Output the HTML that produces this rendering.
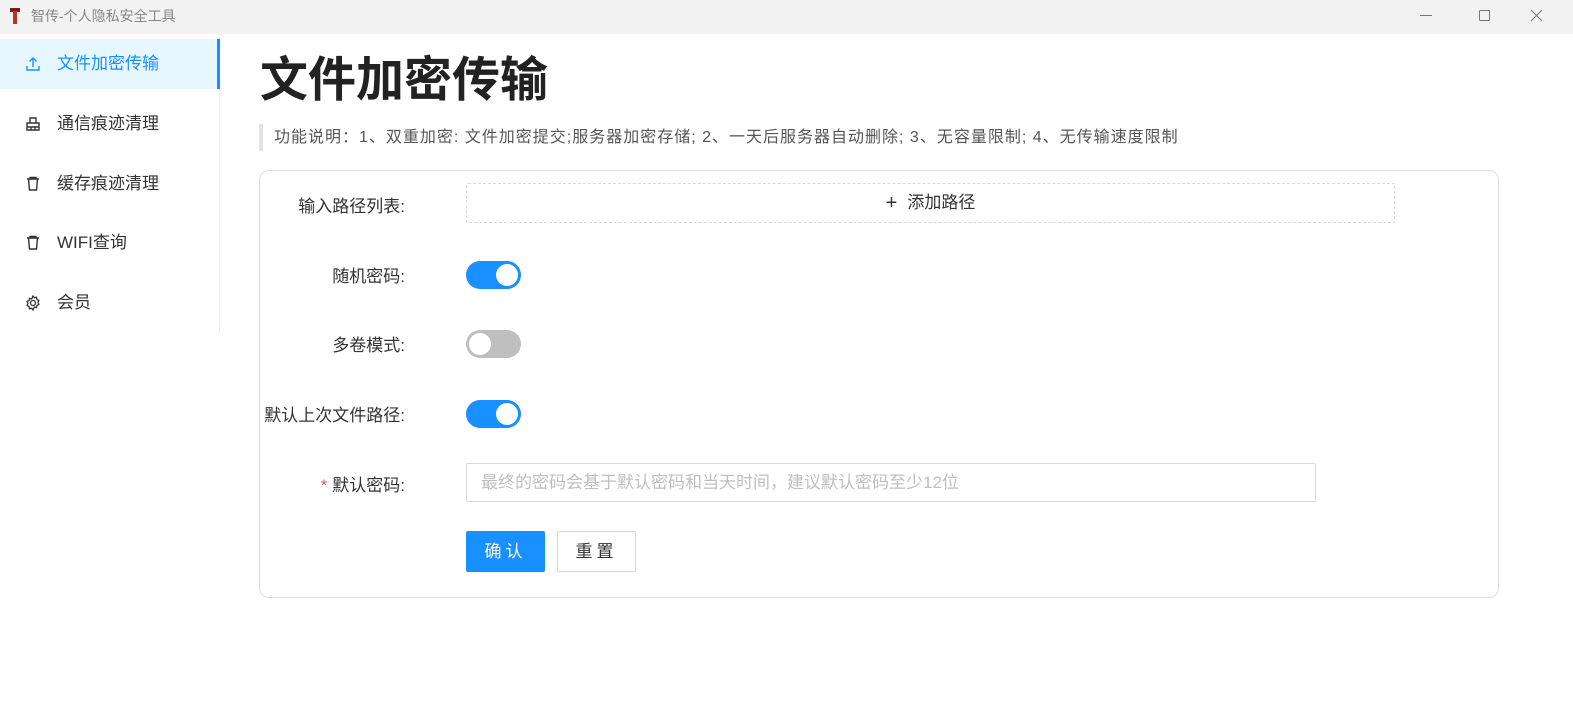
<!DOCTYPE html>
<html><head><meta charset="utf-8"><style>
*{box-sizing:border-box;margin:0;padding:0}
body{width:1573px;height:718px;background:#fff;font-family:"Liberation Sans","Noto Sans CJK SC",sans-serif;position:relative;overflow:hidden;color:#333}
.tb{position:absolute;left:0;top:0;width:1573px;height:34px;background:#f2f2f2}
.tb .t{position:absolute;left:31px;top:6px;font-size:14px;color:#888}
.side{position:absolute;left:0;top:34px;width:220px;height:298px;border-right:1px solid #eee}
.it{position:absolute;left:0;width:219px;height:50px;font-size:17px;color:#333;line-height:50px;padding-left:57px}
.it svg{position:absolute;left:25px;top:17px}
.sel{background:#e6f7ff;color:#1890ff;border-right:3px solid #1890ff;width:220px}
h1{position:absolute;left:260px;top:40px;font-size:48px;font-weight:bold;color:#222}
.desc{position:absolute;left:259px;top:124px;height:27px;border-left:4px solid #e3e3e3;padding-left:11px;font-size:16px;letter-spacing:1px;line-height:27px;color:#555;white-space:nowrap}
.card{position:absolute;left:259px;top:170px;width:1240px;height:428px;border:1px solid #ddd;border-radius:10px}
.lb{position:absolute;right:1168px;font-size:17px;color:#333;white-space:nowrap}
.sw{position:absolute;left:466px;width:55px;height:28px;border-radius:14px;background:#1890ff}
.sw::after{content:"";position:absolute;top:3px;right:3px;width:22px;height:22px;border-radius:50%;background:#fff}
.sw.off{background:#bfbfbf}.sw.off::after{right:auto;left:3px}
</style></head><body>
<div class="tb"><svg style="position:absolute;left:9px;top:7px" width="12" height="18"><rect x="1" y="1" width="10" height="4" fill="#7a1c1c"/><rect x="4" y="4" width="4" height="13" fill="#c0302a"/></svg><span class="t">智传-个人隐私安全工具</span>
<svg style="position:absolute;left:1415px;top:8px" width="150" height="16" stroke="#777" fill="none" stroke-width="1"><line x1="5" y1="7.5" x2="17" y2="7.5"/><rect x="64.5" y="2.5" width="10" height="10" rx="1"/><path d="M116 2 L127 13 M127 2 L116 13"/></svg></div>
<div class="side">
<div class="it sel" style="top:5px"><svg width="16" height="16" fill="none" stroke="#1890ff" stroke-width="1.4"><path d="M8 11V2M4.5 5.5L8 2l3.5 3.5M2 10v4h12v-4"/></svg>文件加密传输</div>
<div class="it" style="top:65px"><svg width="16" height="16" fill="none" stroke="#333" stroke-width="1.4"><path d="M5 2h6v5H5zM2 7h12v7H2zM2 11h12M6 11v3M10 11v3"/></svg>通信痕迹清理</div>
<div class="it" style="top:125px"><svg width="16" height="16" fill="none" stroke="#333" stroke-width="1.4"><path d="M2 3h12M5 3V1.5h6V3M3.5 3l1 11h7l1-11"/></svg>缓存痕迹清理</div>
<div class="it" style="top:184px"><svg width="16" height="16" fill="none" stroke="#333" stroke-width="1.4"><path d="M2 3h12M5 3V1.5h6V3M3.5 3l1 11h7l1-11"/></svg>WIFI查询</div>
<div class="it" style="top:244px"><svg width="16" height="16" fill="none" stroke="#333" stroke-width="1.3"><circle cx="8" cy="8" r="2.5"/><path d="M8 1l1.3 1.8 2.2-.6.4 2.2 2 1-.9 2 .9 2-2 1-.4 2.2-2.2-.6L8 15l-1.3-1.8-2.2.6-.4-2.2-2-1 .9-2-.9-2 2-1 .4-2.2 2.2.6z"/></svg>会员</div>
</div>
<h1>文件加密传输</h1>
<div class="desc">功能说明：1、双重加密: 文件加密提交;服务器加密存储; 2、一天后服务器自动删除; 3、无容量限制; 4、无传输速度限制</div>
<div class="card"></div>
<div class="lb" style="top:192px">输入路径列表:</div>
<div style="position:absolute;left:466px;top:183px;width:929px;height:40px;border:1px dashed #d9d9d9;border-radius:2px;text-align:center;line-height:38px;font-size:17px;color:#333"><span style="font-size:20px;vertical-align:-1px;margin-right:10px">+</span>添加路径</div>
<div class="lb" style="top:262px">随机密码:</div><div class="sw" style="top:261px"></div>
<div class="lb" style="top:331px">多卷模式:</div><div class="sw off" style="top:330px"></div>
<div class="lb" style="top:401px">默认上次文件路径:</div><div class="sw" style="top:400px"></div>
<div class="lb" style="top:471px"><span style="color:#ff4d4f;margin-right:5px">*</span>默认密码:</div>
<div style="position:absolute;left:466px;top:463px;width:850px;height:39px;border:1px solid #d9d9d9;border-radius:2px;padding-left:14px;line-height:37px;font-size:17px;color:#bfbfbf">最终的密码会基于默认密码和当天时间，建议默认密码至少12位</div>
<div style="position:absolute;left:466px;top:531px;width:79px;height:41px;background:#1890ff;border-radius:2px;color:#fff;font-size:17px;line-height:41px;text-align:center;letter-spacing:4px">确认</div>
<div style="position:absolute;left:557px;top:531px;width:79px;height:41px;border:1px solid #d9d9d9;border-radius:2px;color:#333;font-size:17px;line-height:39px;text-align:center;letter-spacing:4px">重置</div>
</body></html>
